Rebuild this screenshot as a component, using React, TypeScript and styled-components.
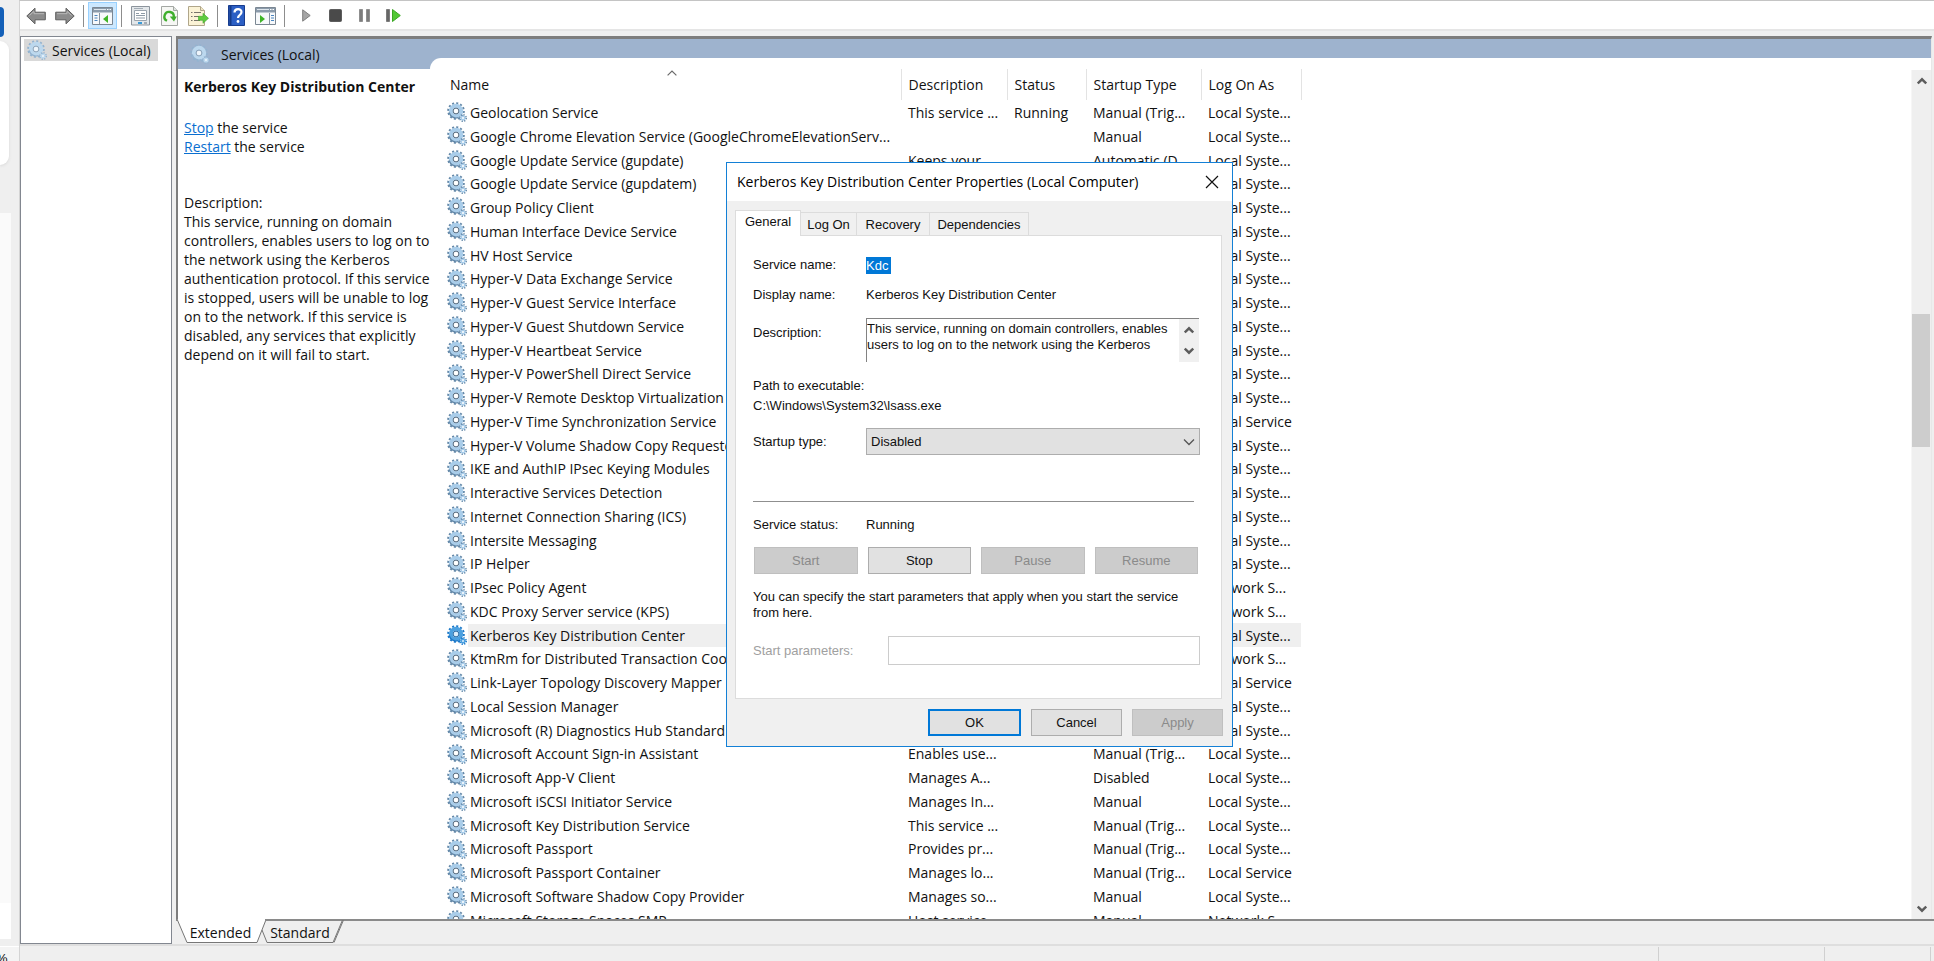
import React from "react";
import styled, { createGlobalStyle } from "styled-components";

const GlobalStyle = createGlobalStyle`
  * { box-sizing: border-box; }
  body {
    margin: 0;
    background: #efefef;
    color: #111;
    font-family: "Open Sans", "Noto Sans", sans-serif;
    font-size: 14px;
    line-height: 19px;
  }
  button, input, textarea, select { font: inherit; color: inherit; margin: 0; }
  svg { display: block; flex: none; }
`;

const Screen = styled.div`
  display: flex;
  height: 100vh;
  overflow: hidden;
`;

/* Sliver of the page that lies behind the console window */
const Behind = styled.aside`
  display: flex;
  flex-direction: column;
  flex: none;
  width: 19px;
  overflow: hidden;
`;
const BehindButton = styled.div`
  width: 4px;
  height: 30px;
  margin-top: 7px;
  background: #1460b8;
  border-radius: 0 5px 5px 0;
`;
const BehindCard = styled.div`
  width: 9px;
  height: 124px;
  margin: 4px 0 48px;
  background: #fff;
  border-radius: 0 9px 9px 0;
  box-shadow: 0 1px 3px #d8d8d8;
`;
const BehindColumn = styled.div`
  flex: 1;
  width: 11px;
  background: #fafafa;
`;
const BehindFoot = styled.div`
  width: 11px;
  height: 36px;
  background: #fff;
`;
const BehindZoom = styled.div`
  height: 15px;
  margin-top: 7px;
  overflow: hidden;
  border-top: 1px solid #fff;
  background: #f4f4f4;
  font: 13px/24px "Liberation Sans", sans-serif;
  text-indent: -4px;
`;

const Console = styled.main`
  display: flex;
  flex-direction: column;
  flex: 1;
  min-width: 0;
  border-top: 1px solid #c4c4c4;
  border-left: 1px solid #d4d4d4;
`;

const Toolbar = styled.div`
  display: flex;
  flex: none;
  align-items: center;
  height: 30px;
  padding: 1px 0 0 1px;
  background: #fff;
  border-bottom: 2px solid #e5e5e5;
`;
const ToolButton = styled.button<{ $active?: boolean }>`
  display: flex;
  align-items: center;
  justify-content: center;
  width: 29px;
  height: 27px;
  padding: 0;
  border: 1px solid ${(p) => (p.$active ? "#99d1ff" : "transparent")};
  background: ${(p) => (p.$active ? "#cce8ff" : "transparent")};
`;
const ToolSeparator = styled.span`
  width: 1px;
  height: 22px;
  margin: 0 4px;
  background: #8d8d8d;
`;
const PlaybackGroup = styled.div`
  display: flex;
  margin-left: 3px;
`;

const Panes = styled.div`
  display: flex;
  flex: 1;
  gap: 4px;
  min-height: 0;
  padding-top: 5px;
`;
const TreePane = styled.nav`
  flex: none;
  width: 152px;
  padding: 2px 3px;
  background: #fff;
  border: 1px solid #828790;
`;
const TreeItem = styled.a`
  display: flex;
  align-items: center;
  gap: 5px;
  width: 134px;
  height: 22px;
  padding-left: 3px;
  background: #d9d9d9;
  color: inherit;
  text-decoration: none;
  white-space: nowrap;
`;
const ResultPane = styled.section`
  display: flex;
  flex-direction: column;
  flex: 1;
  min-width: 0;
`;
const ResultFrame = styled.div`
  display: flex;
  flex-direction: column;
  flex: 1;
  min-height: 0;
  margin-right: 2px;
  border: solid #7d7d7d;
  border-width: 3px 1px 0 2px;
  border-right-color: #e8e8e8;
  background: #fff;
`;
const Band = styled.header`
  display: flex;
  flex: none;
  height: 30px;
  background: #9eb3ce;
`;
const BandTitle = styled.div`
  display: flex;
  align-items: center;
  gap: 11px;
  width: 252px;
  padding-left: 12px;
`;
const BandCutout = styled.div`
  flex: 1;
  margin-top: 19px;
  background: #fff;
  border-top-left-radius: 11px;
`;
const ResultBody = styled.div`
  display: flex;
  flex: 1;
  min-height: 0;
  overflow: hidden;
`;
const Details = styled.article`
  flex: none;
  width: 265px;
  padding: 8px 9px 0 6px;
`;
const DetailsTitle = styled.h1`
  margin: 0 0 22px;
  font-size: 14px;
  font-weight: 700;
  white-space: nowrap;
`;
const DetailsText = styled.p`
  margin: 0 0 37px;
`;
const ActionLink = styled.a`
  color: #0a6fd0;
  text-decoration: underline;
`;

const ListArea = styled.div`
  flex: 1;
  min-width: 0;
  overflow: hidden;
`;
const ServiceTable = styled.table`
  width: 858px;
  table-layout: fixed;
  border-collapse: collapse;
  text-align: left;
  white-space: nowrap;
`;
const Column = styled.col<{ $width: number }>`
  width: ${(p) => p.$width}px;
`;
const HeadCell = styled.th`
  position: relative;
  height: 31px;
  padding: 0 7px;
  border-right: 1px solid #e3e3e3;
  font-weight: 400;
`;
const SortMark = styled.svg`
  position: absolute;
  top: 1px;
  left: 50%;
  margin-left: -5px;
`;
const Row = styled.tr<{ $selected: boolean }>`
  height: 24px;
  &:nth-child(4n) { height: 23px; }
  td { background: ${(p) => (p.$selected ? "#efefef" : "transparent")}; }
  td:first-child { background: transparent; }
  td:first-child span { background: ${(p) => (p.$selected ? "#efefef" : "transparent")}; }
`;
const Cell = styled.td`
  height: inherit;
  padding: 0 7px;
  overflow: hidden;
  line-height: 23px;
`;
const NameCell = styled(Cell)`
  padding: 0 0 0 4px;
`;
const NameLine = styled.div`
  display: flex;
  align-items: center;
  gap: 1px;
`;
const ServiceName = styled.span`
  flex: 1;
  padding-left: 2px;
`;

const ScrollTrack = styled.div`
  display: flex;
  flex-direction: column;
  flex: none;
  width: 20px;
  margin-top: 1px;
  background: #efefef;
  border-left: 1px solid #f6f6f6;
`;
const ScrollButton = styled.button`
  display: flex;
  align-items: center;
  justify-content: center;
  width: 100%;
  height: 21px;
  padding: 0;
  border: 0;
  background: transparent;
`;
const ScrollSpace = styled.div<{ $grow: number }>`
  flex: ${(p) => p.$grow} 0 0;
`;
const ScrollThumb = styled.div`
  height: 133px;
  margin-right: 1px;
  background: #cdcdcd;
`;

const ViewTabs = styled.div`
  display: flex;
  flex: none;
  height: 25px;
  border-top: 2px solid #8a8a8a;
`;
const ViewTab = styled.button<{ $width: number; $front?: boolean }>`
  position: relative;
  z-index: ${(p) => (p.$front ? 1 : 0)};
  width: ${(p) => p.$width}px;
  height: 24px;
  margin: -2px 0 0;
  padding: 3px ${(p) => (p.$front ? 0 : 8)}px 0 0;
  border: 0;
  background: transparent;
`;
const ViewTabShape = styled.svg`
  position: absolute;
  inset: 0;
  z-index: -1;
  overflow: visible;
`;
const StatusBar = styled.footer`
  display: flex;
  flex: none;
  justify-content: flex-end;
  height: 17px;
  padding-top: 1px;
  padding-right: 3px;
  border-top: 2px solid #dedede;
`;
const StatusCell = styled.div<{ $width: number }>`
  width: ${(p) => p.$width}px;
  border-left: 1px solid #d0d0d0;
  &:last-child { border-right: 1px solid #d0d0d0; }
`;

const Dialog = styled.section`
  position: absolute;
  top: 162px;
  left: 726px;
  z-index: 5;
  width: 507px;
  background: #f0f0f0;
  border: 1px solid #1380d6;
  font: 13px/16px "Liberation Sans", Arial, sans-serif;
`;
const DialogBar = styled.header`
  display: flex;
  align-items: center;
  justify-content: space-between;
  height: 38px;
  padding: 0 13px 0 10px;
  background: #fff;
`;
const DialogTitle = styled.h2`
  margin: 0;
  color: #000;
  font: 400 14px/20px "Open Sans", "Noto Sans", sans-serif;
`;
const CloseButton = styled.button`
  padding: 0;
  border: 0;
  background: transparent;
`;
const TabList = styled.div`
  display: flex;
  align-items: flex-end;
  padding: 9px 8px 0;
`;
const Tab = styled.button<{ $width: number; $active?: boolean }>`
  width: ${(p) => p.$width}px;
  height: ${(p) => (p.$active ? 26 : 23)}px;
  margin-bottom: ${(p) => (p.$active ? -1 : 0)}px;
  padding: ${(p) => (p.$active ? "0 0 3px" : "2px 0 0")};
  border: solid #dcdcdc;
  border-width: ${(p) => (p.$active ? "1px 1px 0" : "1px 1px 0 0")};
  background: ${(p) => (p.$active ? "#fff" : "#f0f0f0")};
  z-index: 1;
`;
const TabPanel = styled.div`
  display: flex;
  flex-direction: column;
  height: 464px;
  margin: 0 10px 0 8px;
  padding: 14px 22px 0 17px;
  background: #fff;
  border: 1px solid #dcdcdc;
`;
const Field = styled.div<{ $height: number; $top?: number }>`
  display: grid;
  grid-template-columns: 113px 1fr;
  align-items: center;
  height: ${(p) => p.$height}px;
  margin-top: ${(p) => p.$top ?? 0}px;
`;
const SelectedInput = styled.input`
  width: 25px;
  height: 17px;
  padding: 0;
  border: 0;
  background: #0078d7;
  color: #fff;
`;
const DescriptionLabel = styled.label`
  align-self: start;
  padding-top: 7px;
`;
const DescriptionBox = styled.div`
  display: flex;
  height: 44px;
  border: solid #828282;
  border-width: 1px 0 0 1px;
`;
const DescriptionText = styled.textarea`
  flex: 1;
  min-width: 0;
  padding: 2px 0 0;
  overflow: hidden;
  border: 0;
  background: transparent;
  resize: none;
  white-space: pre;
`;
const DescriptionScroll = styled.div`
  flex: none;
  width: 20px;
  background: #f0f0f0;
`;
const PathBlock = styled.div`
  margin-top: 14px;
  line-height: 20px;
`;
const SelectBox = styled.div`
  display: grid;
  align-items: center;
  margin-right: -1px;
  > * { grid-area: 1 / 1; }
  > svg { justify-self: end; margin-right: 5px; pointer-events: none; }
`;
const StartupSelect = styled.select`
  appearance: none;
  height: 27px;
  padding: 1px 4px 0;
  border: 1px solid #adadad;
  border-radius: 0;
  background: #e1e1e1;
`;
const Divider = styled.hr`
  width: 441px;
  height: 1px;
  margin: 46px 0 15px;
  border: 0;
  background: #8f8f8f;
`;
const ButtonRow = styled.div`
  display: flex;
  gap: 10px;
  margin: 14px 1px 15px;
`;
const PushButton = styled.button<{ $primary?: boolean }>`
  flex: 1;
  height: 27px;
  padding: 0;
  border: ${(p) => (p.$primary ? "2px solid #0078d7" : "1px solid #adadad")};
  background: #e1e1e1;
  &:disabled { background: #cccccc; border-color: #bfbfbf; color: #8a8a8a; }
`;
const ParametersField = styled.div`
  display: grid;
  grid-template-columns: 135px 1fr;
  align-items: center;
  margin: 15px -1px 0 0;
  color: #a0a0a0;
`;
const ParametersInput = styled.input`
  height: 29px;
  border: 1px solid #cccccc;
  background: #fff;
`;
const DialogFooter = styled.footer`
  display: flex;
  gap: 10px;
  width: 295px;
  margin: 10px 9px 10px auto;
`;

function Gear({ tone = "normal" }: { tone?: "normal" | "selected" | "pale" }) {
  const c = {
    normal: ["#6488a8", "#a9cdea", "#4f667c", "#fff"],
    selected: ["#1c78c8", "#4ba0e0", "#2467a3", "#dceefc"],
    pale: ["#93b3d0", "#bcd8ee", "#8aa3ba", "#eef5fb"],
  }[tone];
  return (
    <svg width="20" height="20" viewBox="0 0 20 20" fill="none" aria-hidden="true">
      <circle cx="9" cy="9" r="7.8" stroke={c[0]} strokeWidth="2" strokeDasharray="2.04 2.04" />
      <circle cx="9" cy="9" r="5.2" stroke={c[1]} strokeWidth="4" />
      <path d="M2.2 10.5A7 7 0 0 0 11.5 15.5" stroke={c[0]} strokeWidth="1.2" />
      <circle cx="9" cy="9" r="2.9" fill={c[3]} stroke={c[2]} strokeWidth="1" />
      <circle cx="16" cy="16" r="3.1" stroke={c[0]} strokeWidth="1.8" strokeDasharray="1.22 1.22" />
      <circle cx="16" cy="16" r="1.8" fill={c[3]} stroke={c[1]} strokeWidth="1.6" />
    </svg>
  );
}

function BlockArrow({ flip }: { flip?: boolean }) {
  return (
    <svg width="20" height="18" viewBox="0 0 20 18">
      <path
        transform={flip ? "matrix(-1 0 0 1 20 0)" : undefined}
        d="M.8 9 9 1.2V5.2h10.3v7.600H9v4z"
        fill="#8c8c8c"
        stroke="#5e5e5e"
        strokeLinejoin="round"
      />
      <path transform={flip ? "matrix(-1 0 0 1 20 0)" : undefined} d="M3.5 8.5 8 4.3v2.400h10" fill="none" stroke="#b9b9b9" />
    </svg>
  );
}

function PaneIcon({ right }: { right?: boolean }) {
  return (
    <svg width="21" height="18" viewBox="0 0 21 18">
      <path d="M.5 .5h20v17H.5z" fill="#f7f9fb" stroke="#7b8793" />
      <path d="M1 1h19v4.5H1z" fill="#8b9bab" />
      <path d="M2 2.5h12" stroke="#dfe6ec" />
      <path d="M15 2.5h1.5M17.5 2.5H19" stroke="#fff" />
      <path d={right ? "M14.5 6v11" : "M7.5 6v11"} stroke="#8793a0" />
      <path d={right ? "M16 8.5h3M16 11h3M16 13.5h3" : "M2.5 8.5h3M2.5 11h3M2.5 13.5h3"} stroke="#4b86c0" />
      <path d={right ? "M5 8 10 12l-5 4z" : "M16 8 11 12l5 4z"} fill="#3fb427" />
    </svg>
  );
}

const PropertiesIcon = () => (
  <svg width="19" height="20" viewBox="0 0 19 20">
    <path d="M.5 .5h18v18.500H.5z" fill="#e3e7ea" stroke="#8c949c" />
    <path d="M3.5 4.500h12v10h-12z" fill="#fff" stroke="#9aa4ae" />
    <path d="M3 2.500h9" stroke="#a4adb6" />
    <path d="M5 7.500h3M10 7.500h4M5 9.500h9M5 12h9" stroke="#8d9aa6" />
    <path d="M7 17h4" stroke="#3b9bd8" strokeWidth="2" />
    <path d="M13 17h3" stroke="#a4adb6" strokeWidth="2" />
  </svg>
);

const RefreshIcon = () => (
  <svg width="17" height="20" viewBox="0 0 17 20">
    <path d="M.5 .5h12l4 4v15H.5z" fill="#f6f7f4" stroke="#a3a7a3" />
    <path d="M12.500 .5v4h4" fill="#dfe3df" stroke="#a3a7a3" />
    <path d="M6 14.800A4.700 4.700 0 1 1 12.800 11" fill="none" stroke="#3fae2d" strokeWidth="2.400" />
    <path d="M8.800 10.500h7L13 15.500z" fill="#3fae2d" />
  </svg>
);

const ExportIcon = () => (
  <svg width="21" height="20" viewBox="0 0 21 20">
    <path d="M.5 .5h12l4 4v15H.5z" fill="#fbf3d6" stroke="#b0a68a" />
    <path d="M12.500 .5v4h4" fill="#efe6c4" stroke="#b0a68a" />
    <path d="M3 6.500h1.500M3 10.500h1.500M3 14.500h1.500M6 6.500h7M6 10.500h5M6 14.500h6" stroke="#77736a" />
    <path d="M10.500 10.300h4.500V7.300l5.500 5-5.500 5v-3h-4.500z" fill="#5ecb3e" stroke="#3fa52a" strokeWidth=".6" />
  </svg>
);

const HelpIcon = () => (
  <svg width="17" height="21" viewBox="0 0 17 21">
    <path d="M.5 .5h16v20H.5z" fill="#2c5fc4" stroke="#173c8e" />
    <path d="M2.500 1v19" stroke="#153a86" strokeWidth="2" />
    <path d="M6.500 7.500c0-4.500 7-4.500 7-.5 0 3-3.500 3-3.500 6" fill="none" stroke="#fff" strokeWidth="2.200" />
    <circle cx="10" cy="16.500" r="1.400" fill="#fff" />
  </svg>
);

const PlayIcon = () => (
  <svg width="9" height="13" viewBox="0 0 9 13">
    <path d="M.7 .8 8.200 6.500.7 12.200z" fill="#a5a5a5" stroke="#7f7f7f" />
  </svg>
);
const StopIcon = () => (
  <svg width="13" height="13" viewBox="0 0 13 13">
    <rect x=".5" y=".5" width="12" height="12" rx="1" fill="#4a4a4a" stroke="#5d5d5d" />
  </svg>
);
const PauseIcon = () => (
  <svg width="11" height="13" viewBox="0 0 11 13">
    <path d="M.5 .5h3v12h-3zM7.500 .5h3v12h-3z" fill="#7c7c7c" stroke="#8f8f8f" />
  </svg>
);
const RestartIcon = () => (
  <svg width="15" height="13" viewBox="0 0 15 13">
    <path d="M.5 .5h3v12h-3z" fill="#666" stroke="#7c7c7c" />
    <path d="M6.500 .5 14.300 6.500 6.500 12.500z" fill="#52c834" stroke="#3aa723" />
  </svg>
);

const ScrollArrow = ({ down }: { down?: boolean }) => (
  <svg width="10" height="8" viewBox="0 0 10 8">
    <path d={down ? "M.8 1.500 5 5.700 9.200 1.500" : "M.8 6.500 5 2.300 9.200 6.500"} fill="none" stroke="#5c5c5c" strokeWidth="2.400" />
  </svg>
);

const SYS = "Local Syste...";
const SVC = "Local Service";
const NET = "Network S...";
const TRIG = "Manual (Trig...";

/* name, description, status, startup type, log on as */
const services: [string, string, string, string, string][] = [
  ["Geolocation Service", "This service ...", "Running", TRIG, SYS],
  ["Google Chrome Elevation Service (GoogleChromeElevationServ...", "", "", "Manual", SYS],
  ["Google Update Service (gupdate)", "Keeps your ...", "", "Automatic (D...", SYS],
  ["Google Update Service (gupdatem)", "Keeps your ...", "", "Manual", SYS],
  ["Group Policy Client", "The service i...", "Running", "Automatic (T...", SYS],
  ["Human Interface Device Service", "Activates an...", "", TRIG, SYS],
  ["HV Host Service", "Provides an ...", "", TRIG, SYS],
  ["Hyper-V Data Exchange Service", "Provides a ...", "", TRIG, SYS],
  ["Hyper-V Guest Service Interface", "Provides an ...", "", TRIG, SYS],
  ["Hyper-V Guest Shutdown Service", "Provides a ...", "", TRIG, SYS],
  ["Hyper-V Heartbeat Service", "Monitors th...", "", TRIG, SYS],
  ["Hyper-V PowerShell Direct Service", "Provides a ...", "", TRIG, SYS],
  ["Hyper-V Remote Desktop Virtualization Service", "Provides a p...", "", TRIG, SYS],
  ["Hyper-V Time Synchronization Service", "Synchronize...", "", TRIG, SVC],
  ["Hyper-V Volume Shadow Copy Requestor", "Coordinates...", "", TRIG, SYS],
  ["IKE and AuthIP IPsec Keying Modules", "The IKEEXT ...", "Running", TRIG, SYS],
  ["Interactive Services Detection", "Enables use...", "", "Manual", SYS],
  ["Internet Connection Sharing (ICS)", "Provides ne...", "", TRIG, SYS],
  ["Intersite Messaging", "Enables me...", "", "Disabled", SYS],
  ["IP Helper", "Provides tu...", "Running", "Automatic", SYS],
  ["IPsec Policy Agent", "Internet Pro...", "Running", TRIG, NET],
  ["KDC Proxy Server service (KPS)", "KDC Proxy S...", "", "Manual", NET],
  ["Kerberos Key Distribution Center", "This service,...", "Running", "Disabled", SYS],
  ["KtmRm for Distributed Transaction Coordinator", "Coordinates...", "", TRIG, NET],
  ["Link-Layer Topology Discovery Mapper", "Creates a N...", "", "Manual", SVC],
  ["Local Session Manager", "Core Windo...", "Running", "Automatic", SYS],
  ["Microsoft (R) Diagnostics Hub Standard Collector", "Diagnostics ...", "", "Manual", SYS],
  ["Microsoft Account Sign-in Assistant", "Enables use...", "", TRIG, SYS],
  ["Microsoft App-V Client", "Manages A...", "", "Disabled", SYS],
  ["Microsoft iSCSI Initiator Service", "Manages In...", "", "Manual", SYS],
  ["Microsoft Key Distribution Service", "This service ...", "", TRIG, SYS],
  ["Microsoft Passport", "Provides pr...", "", TRIG, SYS],
  ["Microsoft Passport Container", "Manages lo...", "", TRIG, SVC],
  ["Microsoft Software Shadow Copy Provider", "Manages so...", "", "Manual", SYS],
  ["Microsoft Storage Spaces SMP", "Host service...", "", "Manual", NET],
];

function ConsoleToolbar() {
  return (
    <Toolbar role="toolbar" aria-label="Console">
      <ToolButton aria-label="Back"><BlockArrow /></ToolButton>
      <ToolButton aria-label="Forward"><BlockArrow flip /></ToolButton>
      <ToolSeparator />
      <ToolButton $active aria-label="Show or hide console tree"><PaneIcon /></ToolButton>
      <ToolSeparator />
      <ToolButton aria-label="Properties"><PropertiesIcon /></ToolButton>
      <ToolButton aria-label="Refresh"><RefreshIcon /></ToolButton>
      <ToolButton aria-label="Export list"><ExportIcon /></ToolButton>
      <ToolSeparator />
      <ToolButton aria-label="Help"><HelpIcon /></ToolButton>
      <ToolButton aria-label="Show or hide action pane"><PaneIcon right /></ToolButton>
      <ToolSeparator />
      <PlaybackGroup>
        <ToolButton aria-label="Start service"><PlayIcon /></ToolButton>
        <ToolButton aria-label="Stop service"><StopIcon /></ToolButton>
        <ToolButton aria-label="Pause service"><PauseIcon /></ToolButton>
        <ToolButton aria-label="Restart service"><RestartIcon /></ToolButton>
      </PlaybackGroup>
    </Toolbar>
  );
}

function ServiceList() {
  return (
    <ListArea>
      <ServiceTable>
        <colgroup>
          <Column $width={458} />
          <Column $width={106} />
          <Column $width={79} />
          <Column $width={115} />
          <Column $width={100} />
        </colgroup>
        <thead>
          <tr>
            <HeadCell>
              Name
              <SortMark width="10" height="6" viewBox="0 0 10 6">
                <path d="M.6 5.400 5 1l4.400 4.400" fill="none" stroke="#6a6a6a" strokeWidth="1.200" />
              </SortMark>
            </HeadCell>
            <HeadCell>Description</HeadCell>
            <HeadCell>Status</HeadCell>
            <HeadCell>Startup Type</HeadCell>
            <HeadCell>Log On As</HeadCell>
          </tr>
        </thead>
        <tbody>
          {services.map(([name, description, status, startup, account]) => {
            const selected = name === "Kerberos Key Distribution Center";
            return (
              <Row key={name} $selected={selected}>
                <NameCell>
                  <NameLine>
                    <Gear tone={selected ? "selected" : "normal"} />
                    <ServiceName>{name}</ServiceName>
                  </NameLine>
                </NameCell>
                <Cell>{description}</Cell>
                <Cell>{status}</Cell>
                <Cell>{startup}</Cell>
                <Cell>{account}</Cell>
              </Row>
            );
          })}
        </tbody>
      </ServiceTable>
    </ListArea>
  );
}

function PropertiesDialog() {
  return (
    <Dialog role="dialog" aria-labelledby="dialog-title">
      <DialogBar>
        <DialogTitle id="dialog-title">Kerberos Key Distribution Center Properties (Local Computer)</DialogTitle>
        <CloseButton aria-label="Close">
          <svg width="14" height="14" viewBox="0 0 14 14">
            <path d="M1 1l12 12M13 1 1 13" stroke="#111" strokeWidth="1.200" />
          </svg>
        </CloseButton>
      </DialogBar>
      <TabList role="tablist">
        <Tab role="tab" aria-selected $active $width={66}>General</Tab>
        <Tab role="tab" $width={56}>Log On</Tab>
        <Tab role="tab" $width={73}>Recovery</Tab>
        <Tab role="tab" $width={99}>Dependencies</Tab>
      </TabList>
      <TabPanel role="tabpanel">
        <Field $height={30}>
          <label htmlFor="service-name">Service name:</label>
          <SelectedInput id="service-name" readOnly value="Kdc" />
        </Field>
        <Field $height={30}>
          <span>Display name:</span>
          <span>Kerberos Key Distribution Center</span>
        </Field>
        <Field $height={44} $top={8}>
          <DescriptionLabel htmlFor="service-description">Description:</DescriptionLabel>
          <DescriptionBox>
            <DescriptionText
              id="service-description"
              readOnly
              value={"This service, running on domain controllers, enables\nusers to log on to the network using the Kerberos"}
            />
            <DescriptionScroll>
              <ScrollButton aria-label="Scroll up"><ScrollArrow /></ScrollButton>
              <ScrollButton aria-label="Scroll down"><ScrollArrow down /></ScrollButton>
            </DescriptionScroll>
          </DescriptionBox>
        </Field>
        <PathBlock>
          Path to executable:
          <br />
          C:\Windows\System32\lsass.exe
        </PathBlock>
        <Field $height={27} $top={12}>
          <label htmlFor="startup-type">Startup type:</label>
          <SelectBox>
            <StartupSelect id="startup-type" defaultValue="Disabled">
              <option>Automatic</option>
              <option>Manual</option>
              <option>Disabled</option>
            </StartupSelect>
            <svg width="12" height="8" viewBox="0 0 12 8">
              <path d="M1 1.500 6 6.500l5-5" fill="none" stroke="#555" strokeWidth="1.300" />
            </svg>
          </SelectBox>
        </Field>
        <Divider />
        <Field $height={16}>
          <span>Service status:</span>
          <span>Running</span>
        </Field>
        <ButtonRow>
          <PushButton disabled>Start</PushButton>
          <PushButton>Stop</PushButton>
          <PushButton disabled>Pause</PushButton>
          <PushButton disabled>Resume</PushButton>
        </ButtonRow>
        <div>
          You can specify the start parameters that apply when you start the service
          <br />
          from here.
        </div>
        <ParametersField>
          <label htmlFor="start-parameters">Start parameters:</label>
          <ParametersInput id="start-parameters" disabled />
        </ParametersField>
      </TabPanel>
      <DialogFooter>
        <PushButton $primary>OK</PushButton>
        <PushButton>Cancel</PushButton>
        <PushButton disabled>Apply</PushButton>
      </DialogFooter>
    </Dialog>
  );
}

export default function App() {
  return (
    <Screen>
      <GlobalStyle />
      <Behind>
        <BehindButton />
        <BehindCard />
        <BehindColumn />
        <BehindFoot />
        <BehindZoom>%</BehindZoom>
      </Behind>
      <Console>
        <ConsoleToolbar />
        <Panes>
          <TreePane>
            <TreeItem href="#services"><Gear tone="pale" />Services (Local)</TreeItem>
          </TreePane>
          <ResultPane>
            <ResultFrame>
              <Band>
                <BandTitle><Gear tone="pale" />Services (Local)</BandTitle>
                <BandCutout />
              </Band>
              <ResultBody>
                <Details>
                  <DetailsTitle>Kerberos Key Distribution Center</DetailsTitle>
                  <DetailsText>
                    <ActionLink href="#stop">Stop</ActionLink> the service
                    <br />
                    <ActionLink href="#restart">Restart</ActionLink> the service
                  </DetailsText>
                  <DetailsText>
                    Description:
                    <br />
                    This service, running on domain controllers, enables users to log on to the network using the
                    Kerberos authentication protocol. If this service is stopped, users will be unable to log on to
                    the network. If this service is disabled, any services that explicitly depend on it will fail to
                    start.
                  </DetailsText>
                </Details>
                <ServiceList />
                <ScrollTrack>
                  <ScrollButton aria-label="Scroll list up"><ScrollArrow /></ScrollButton>
                  <ScrollSpace $grow={222} />
                  <ScrollThumb />
                  <ScrollSpace $grow={450} />
                  <ScrollButton aria-label="Scroll list down"><ScrollArrow down /></ScrollButton>
                </ScrollTrack>
              </ResultBody>
            </ResultFrame>
            <ViewTabs>
              <ViewTab $width={89} $front>
                <ViewTabShape width="89" height="24">
                  <path d="M1 0 11 23H81L89 2V0z" fill="#fff" />
                  <path d="M1 0 11 23.500H81L89.500 2" fill="none" stroke="#777" />
                </ViewTabShape>
                Extended
              </ViewTab>
              <ViewTab $width={78}>
                <ViewTabShape width="78" height="24">
                  <path d="M-3 11 2 23.500H68L77.500 1" fill="none" stroke="#777" />
                  <path d="M69 23.500 78.500 1" fill="none" stroke="#777" />
                </ViewTabShape>
                Standard
              </ViewTab>
            </ViewTabs>
          </ResultPane>
        </Panes>
        <StatusBar>
          <StatusCell $width={166} />
          <StatusCell $width={107} />
        </StatusBar>
      </Console>
      <PropertiesDialog />
    </Screen>
  );
}
